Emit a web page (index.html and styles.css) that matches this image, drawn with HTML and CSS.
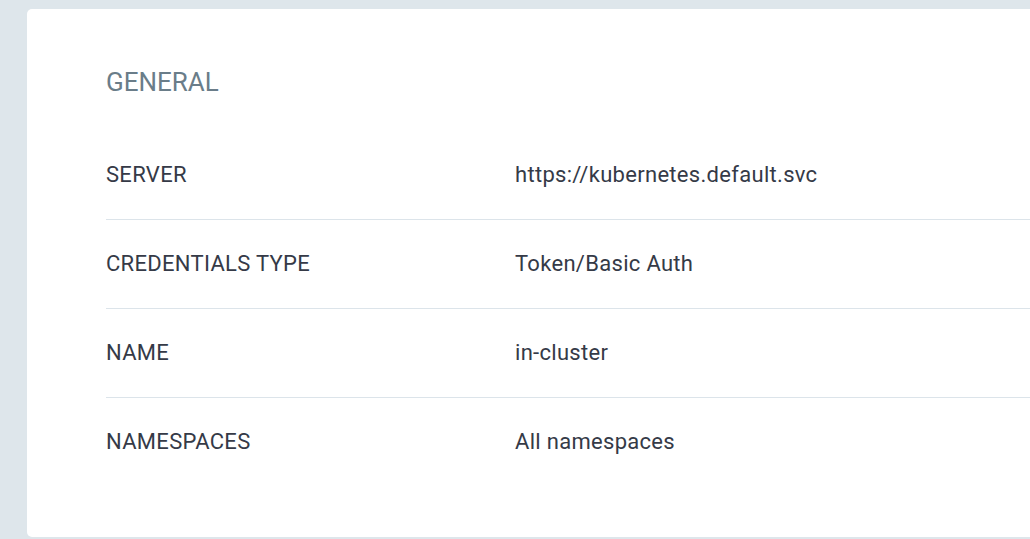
FILE: index.html
```html
<!DOCTYPE html>
<html>
<head>
<meta charset="utf-8">
<link rel="stylesheet" href="styles.css">
</head>
<body>
<div class="page">
  <section class="card">
    <h2 class="card-title">GENERAL</h2>
    <div class="rows">
      <div class="row"><div class="label">SERVER</div><div class="value">https://kubernetes.default.svc</div></div>
      <div class="row"><div class="label">CREDENTIALS TYPE</div><div class="value">Token/Basic Auth</div></div>
      <div class="row"><div class="label">NAME</div><div class="value">in-cluster</div></div>
      <div class="row"><div class="label">NAMESPACES</div><div class="value">All namespaces</div></div>
    </div>
  </section>
</div>
</body>
</html>
```
FILE: styles.css
```css
html, body {
  margin: 0;
  padding: 0;
  background: #dee6eb;
  overflow: hidden;
  height: 539px;
}
body {
  font-family: Roboto, "Liberation Sans", sans-serif;
  color: #353a47;
}
.page {
  padding: 9px 0 0 27px;
}
.card {
  background: #ffffff;
  width: 1100px;
  border-radius: 5px;
  padding: 58px 0 51px 79px;
  box-sizing: border-box;
}
.card-title {
  margin: 0 0 34px 0;
  font-size: 26px;
  line-height: 30px;
  font-weight: 400;
  color: #6a7d89;
}
.row {
  display: grid;
  grid-template-columns: 409px 1fr;
  align-items: center;
  height: 88px;
  border-bottom: 1px solid #dce4ea;
  font-size: 22px;
  line-height: 26px;
  letter-spacing: 0.3px;
}
.row:last-child {
  border-bottom: none;
}
```
